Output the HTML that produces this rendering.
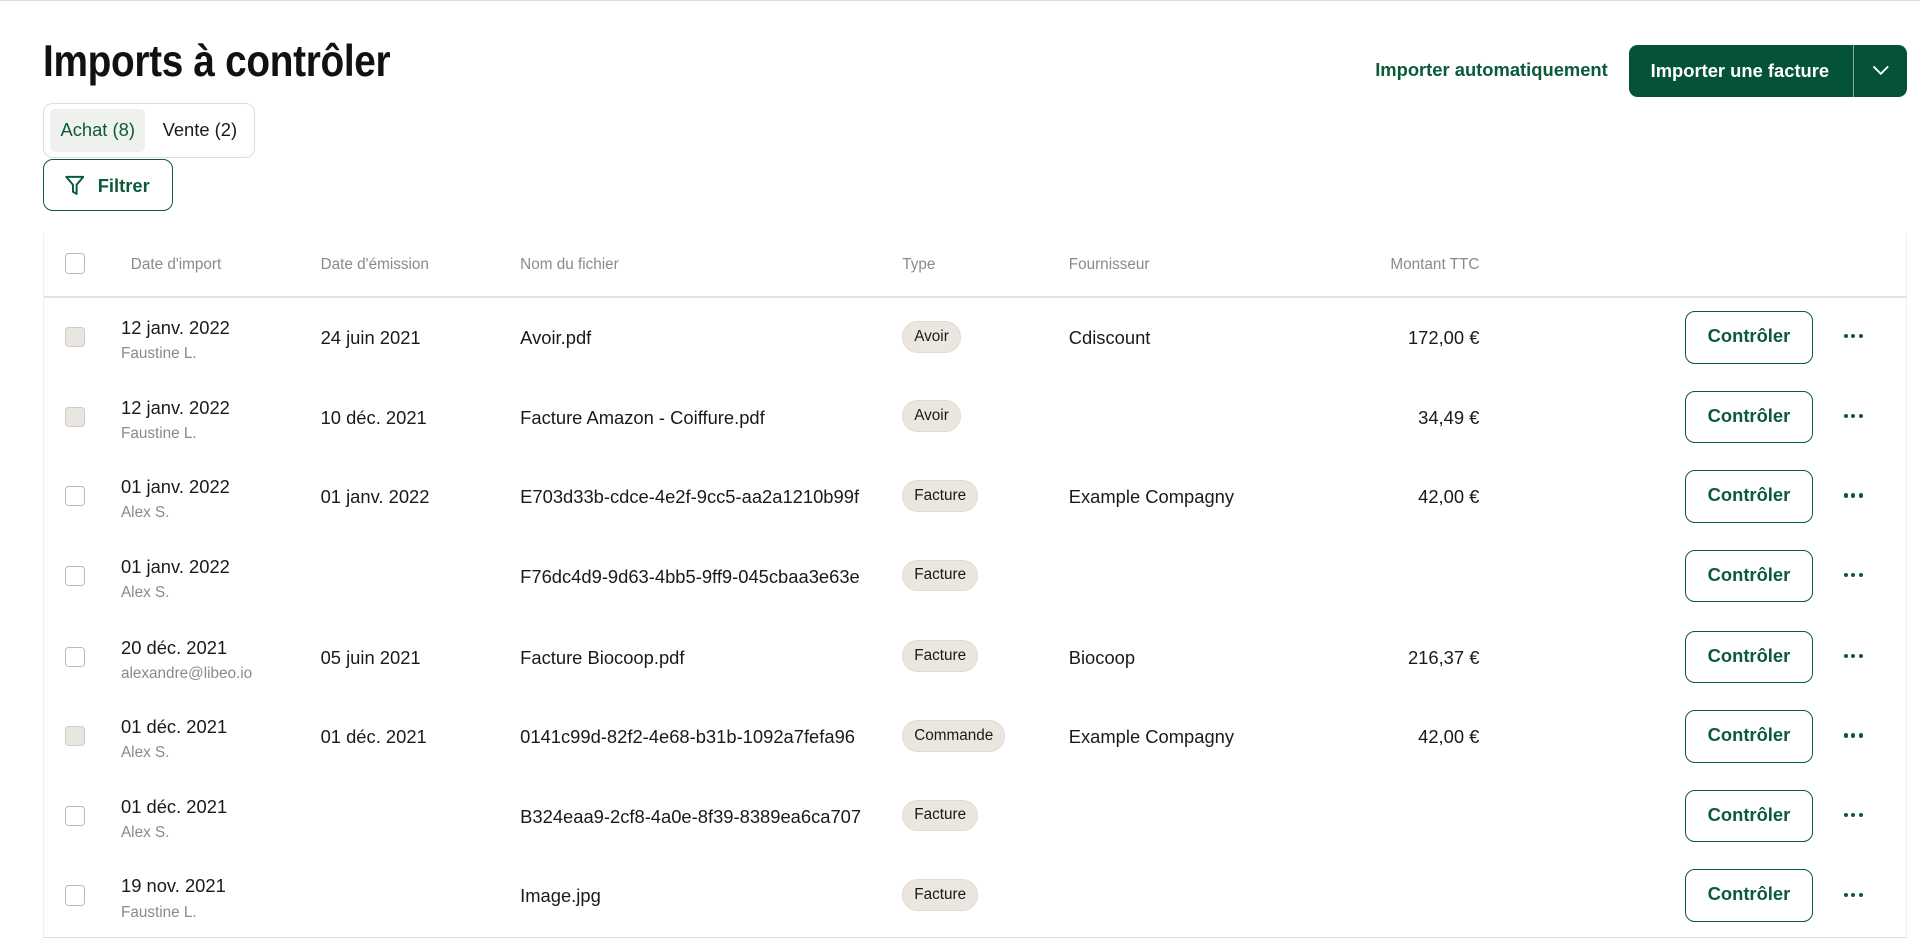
<!DOCTYPE html>
<html><head><meta charset="utf-8">
<style>
html,body{margin:0;padding:0;background:#fff;}
body{width:1568px;height:776px;zoom:1.22449;position:relative;overflow:hidden;font-family:"Liberation Sans",Arial,sans-serif;color:#1a1a1a;}
.topline{position:absolute;left:0;top:0;width:1568px;height:1px;background:#ddd;}
h1{position:absolute;left:35px;top:30px;margin:0;font-family:"Liberation Sans",sans-serif;font-weight:700;font-size:36px;letter-spacing:-0.3px;color:#111;transform:scaleX(0.88);transform-origin:0 0;white-space:nowrap;}
.tabs{position:absolute;left:35px;top:84px;width:173px;height:45px;border:1px solid #ddd;border-radius:8px;box-sizing:border-box;}
.tab1{position:absolute;left:5px;top:4px;width:78px;height:35px;background:#eef1ee;border-radius:4px;color:#0b5a3a;font-size:15px;line-height:35px;text-align:center;}
.tab2{position:absolute;left:97px;top:4px;line-height:35px;font-size:15px;}
.filter{position:absolute;left:35px;top:130px;width:106px;height:42px;border:1.5px solid #0b5a3a;border-radius:8px;box-sizing:border-box;color:#0b5a3a;font-weight:700;font-size:15px;}
.filter svg{position:absolute;left:17px;top:12px;}
.filter span{position:absolute;left:44px;top:12px;}
.auto{position:absolute;right:255px;top:48px;color:#0b5a3a;font-weight:700;font-size:15px;}
.prim{position:absolute;left:1330px;top:37px;width:227px;height:42px;background:#05523a;border-radius:7px;color:#fff;font-weight:700;font-size:15px;}
.prim span{position:absolute;left:18px;top:12px;}
.prim .div{position:absolute;left:183px;top:0;width:1px;height:42px;background:#8aa99b;}
.prim svg{position:absolute;left:198px;top:15px;}
.table{position:absolute;left:35px;top:190px;width:1522px;height:576px;border-left:1px solid #eee;border-right:1px solid #eee;border-bottom:1px solid #ddd;box-sizing:border-box;}
.hdr{position:absolute;top:0;left:0;width:100%;height:52px;border-bottom:2px solid #e4e1dc;}
.th{position:absolute;top:19px;font-size:12.5px;color:#8a8a8a;}
.cb{position:absolute;width:15px;height:15px;border:1.3px solid #bbb;border-radius:3px;background:#fff;}
.cb.f{background:#e9e5e0;border-color:#ccc;}
.row{position:absolute;left:0;width:100%;height:65px;}
.d1{position:absolute;left:63px;top:17px;font-size:15px;}
.d2{position:absolute;left:63px;top:40px;font-size:12.5px;color:#8a8a8a;}
.c{position:absolute;top:25px;font-size:15px;}
.badge{position:absolute;left:701px;top:20px;height:26px;padding:0 9px;border-radius:13px;background:#ebe6e0;border:1px solid #e0dbd4;font-size:12.5px;box-sizing:border-box;display:flex;align-items:center;}
.amt{position:absolute;right:348px;top:25px;font-size:15px;}
.ctl{position:absolute;left:1340px;top:12px;width:105px;height:43px;border:1.3px solid #0b5a3a;border-radius:8px;box-sizing:border-box;color:#0b5a3a;font-weight:700;font-size:15px;text-align:center;line-height:40px;}
.dots{position:absolute;left:1470px;top:31px;width:16px;height:4px;}
.dots i{position:absolute;top:0;width:3.4px;height:3.4px;border-radius:50%;background:#0b5a3a;}
</style></head><body>
<div class="topline"></div>
<h1>Imports à contrôler</h1>
<div class="tabs"><div class="tab1">Achat (8)</div><div class="tab2">Vente (2)</div></div>
<div class="filter"><svg width="16" height="17" viewBox="0 0 16 17" fill="none" stroke="#0b5a3a" stroke-width="1.6" stroke-linejoin="round"><path d="M1 1.5h14L9.5 8v7.5l-3-1.8V8z"/></svg><span>Filtrer</span></div>
<div class="auto">Importer automatiquement</div>
<div class="prim"><span>Importer une facture</span><div class="div"></div><svg width="16" height="10" viewBox="0 0 16 10" fill="none" stroke="#fff" stroke-width="1.5"><path d="M2 2l6 6 6-6"/></svg></div>
<div class="table">
<div class="hdr">
<div class="cb" style="left:17px;top:17px"></div>
<div class="th" style="left:71px">Date d'import</div>
<div class="th" style="left:226px">Date d'émission</div>
<div class="th" style="left:389px">Nom du fichier</div>
<div class="th" style="left:701px">Type</div>
<div class="th" style="left:837px">Fournisseur</div>
<div class="th" style="right:348px">Montant TTC</div>
</div>

<div class="row" style="top:52px"><div class="cb f" style="left:17px;top:25px"></div><div class="d1">12 janv. 2022</div><div class="d2">Faustine L.</div><div class="c" style="left:226px">24 juin 2021</div><div class="c" style="left:389px">Avoir.pdf</div><div class="badge">Avoir</div><div class="c" style="left:837px">Cdiscount</div><div class="amt">172,00 €</div><div class="ctl">Contrôler</div><div class="dots"><i style="left:0"></i><i style="left:6px"></i><i style="left:12px"></i></div></div>

<div class="row" style="top:117px"><div class="cb f" style="left:17px;top:25px"></div><div class="d1">12 janv. 2022</div><div class="d2">Faustine L.</div><div class="c" style="left:226px">10 déc. 2021</div><div class="c" style="left:389px">Facture Amazon - Coiffure.pdf</div><div class="badge">Avoir</div><div class="amt">34,49 €</div><div class="ctl">Contrôler</div><div class="dots"><i style="left:0"></i><i style="left:6px"></i><i style="left:12px"></i></div></div>

<div class="row" style="top:182px"><div class="cb" style="left:17px;top:25px"></div><div class="d1">01 janv. 2022</div><div class="d2">Alex S.</div><div class="c" style="left:226px">01 janv. 2022</div><div class="c" style="left:389px">E703d33b-cdce-4e2f-9cc5-aa2a1210b99f</div><div class="badge">Facture</div><div class="c" style="left:837px">Example Compagny</div><div class="amt">42,00 €</div><div class="ctl">Contrôler</div><div class="dots"><i style="left:0"></i><i style="left:6px"></i><i style="left:12px"></i></div></div>

<div class="row" style="top:247px"><div class="cb" style="left:17px;top:25px"></div><div class="d1">01 janv. 2022</div><div class="d2">Alex S.</div><div class="c" style="left:389px">F76dc4d9-9d63-4bb5-9ff9-045cbaa3e63e</div><div class="badge">Facture</div><div class="ctl">Contrôler</div><div class="dots"><i style="left:0"></i><i style="left:6px"></i><i style="left:12px"></i></div></div>

<div class="row" style="top:313px"><div class="cb" style="left:17px;top:25px"></div><div class="d1">20 déc. 2021</div><div class="d2">alexandre@libeo.io</div><div class="c" style="left:226px">05 juin 2021</div><div class="c" style="left:389px">Facture Biocoop.pdf</div><div class="badge">Facture</div><div class="c" style="left:837px">Biocoop</div><div class="amt">216,37 €</div><div class="ctl">Contrôler</div><div class="dots"><i style="left:0"></i><i style="left:6px"></i><i style="left:12px"></i></div></div>

<div class="row" style="top:378px"><div class="cb f" style="left:17px;top:25px"></div><div class="d1">01 déc. 2021</div><div class="d2">Alex S.</div><div class="c" style="left:226px">01 déc. 2021</div><div class="c" style="left:389px">0141c99d-82f2-4e68-b31b-1092a7fefa96</div><div class="badge">Commande</div><div class="c" style="left:837px">Example Compagny</div><div class="amt">42,00 €</div><div class="ctl">Contrôler</div><div class="dots"><i style="left:0"></i><i style="left:6px"></i><i style="left:12px"></i></div></div>

<div class="row" style="top:443px"><div class="cb" style="left:17px;top:25px"></div><div class="d1">01 déc. 2021</div><div class="d2">Alex S.</div><div class="c" style="left:389px">B324eaa9-2cf8-4a0e-8f39-8389ea6ca707</div><div class="badge">Facture</div><div class="ctl">Contrôler</div><div class="dots"><i style="left:0"></i><i style="left:6px"></i><i style="left:12px"></i></div></div>

<div class="row" style="top:508px"><div class="cb" style="left:17px;top:25px"></div><div class="d1">19 nov. 2021</div><div class="d2">Faustine L.</div><div class="c" style="left:389px">Image.jpg</div><div class="badge">Facture</div><div class="ctl">Contrôler</div><div class="dots"><i style="left:0"></i><i style="left:6px"></i><i style="left:12px"></i></div></div>
</div>
</body></html>
